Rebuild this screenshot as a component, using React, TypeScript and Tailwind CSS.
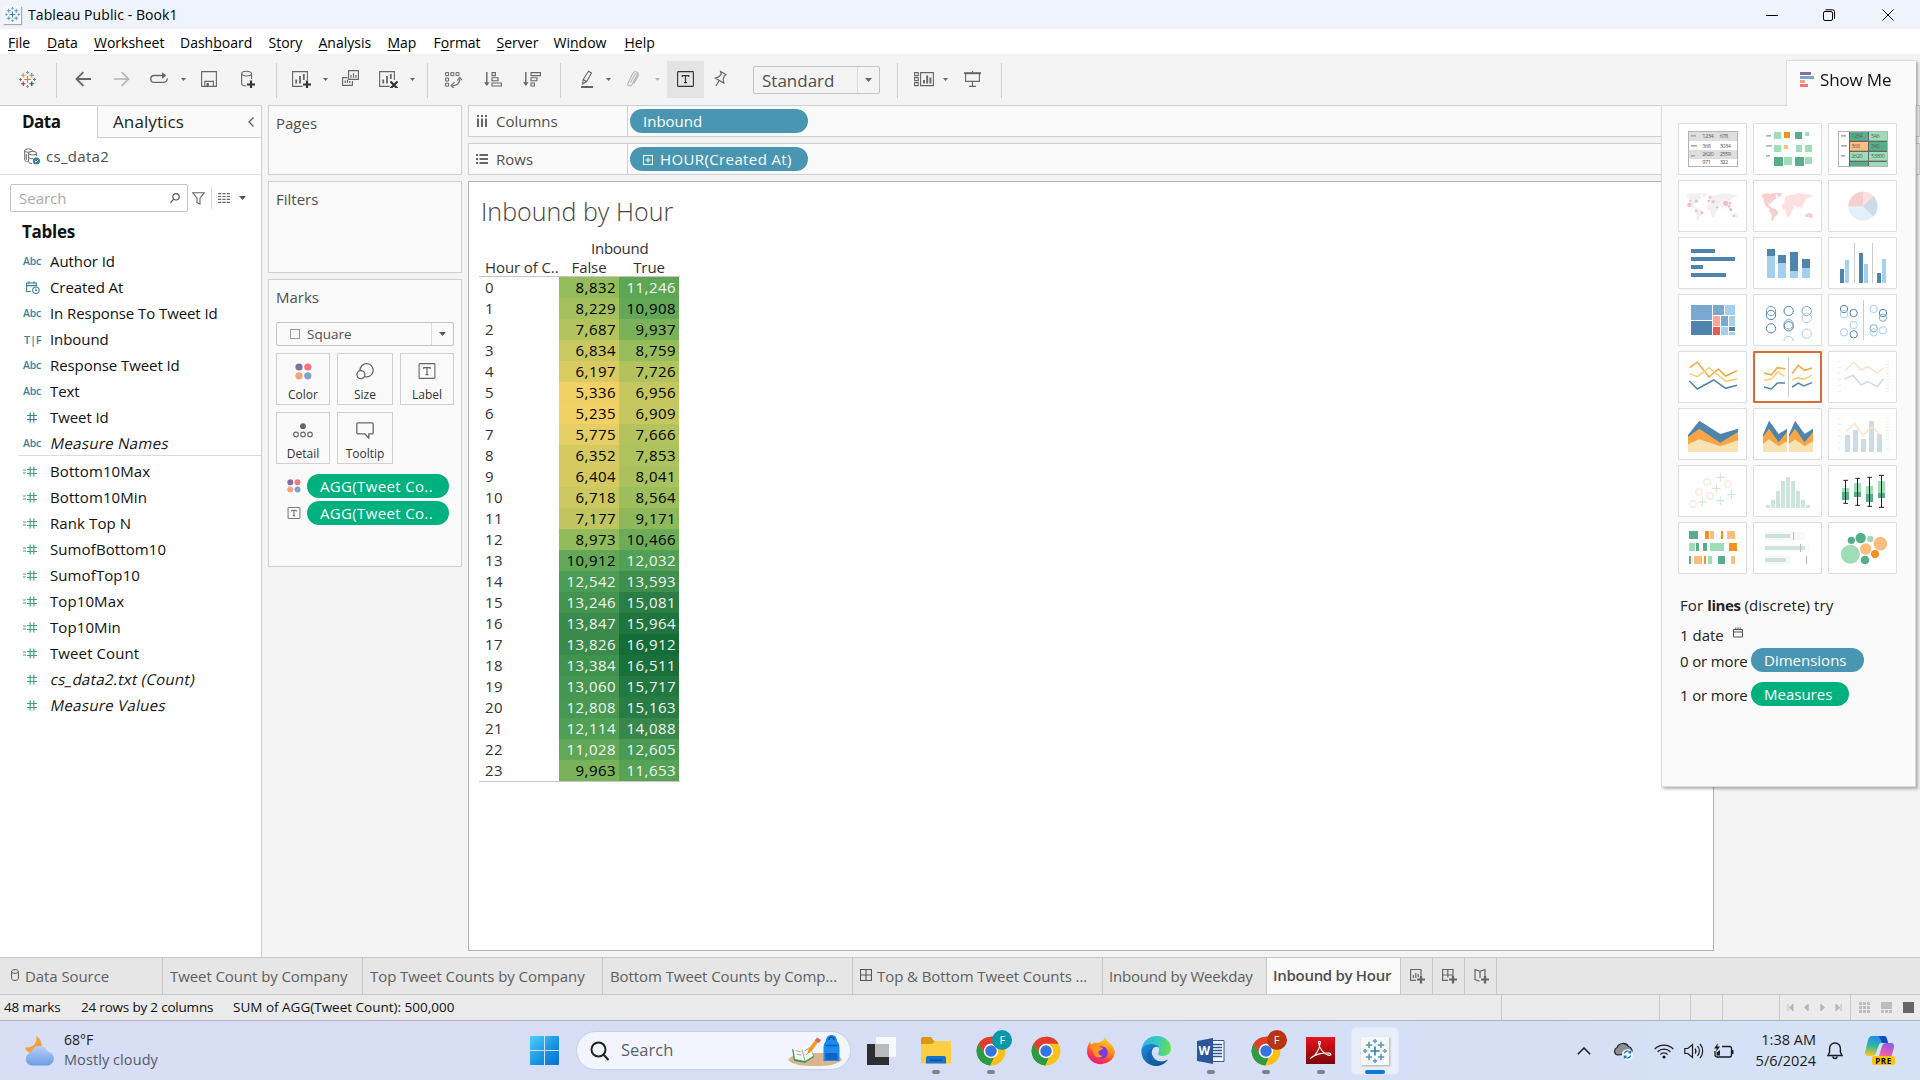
import type { ReactNode } from "react";

const BLUE = "#4f85ad";
const MID = "#7aa9cf";
const SKY = "#a5d0f0";
const GREEN = "#57ae8b";
const MINT = "#9fdcb8";
const ORANGE = "#f59024";
const PEACH = "#ffbe7f";

/* ---------- Tableau mark ---------- */
function plus(x: number, y: number, r: number) {
  return `M${x - r} ${y}H${x + r}M${x} ${y - r}V${y + r}`;
}

function TableauMark({ colors, className }: { colors: string[]; className: string }) {
  return (
    <svg viewBox="0 0 34 34" className={className} fill="none" strokeWidth="2.2">
      <path d={plus(17, 17, 6.5)} stroke={colors[0]} />
      <path d={plus(8.5, 8.5, 4.5)} stroke={colors[1]} />
      <path d={plus(25.5, 8.5, 4.5)} stroke={colors[2]} />
      <path d={plus(8.5, 25.5, 4.5)} stroke={colors[3]} />
      <path d={plus(25.5, 25.5, 4.5)} stroke={colors[4]} />
      <path d={plus(17, 3, 3)} stroke={colors[5]} />
      <path d={plus(3, 17, 3)} stroke={colors[6]} />
      <path d={plus(31, 17, 3)} stroke={colors[6]} />
      <path d={plus(17, 31, 3)} stroke={colors[5]} />
    </svg>
  );
}

const BLUES = ["#2f7fae", "#5b97b8", "#5b97b8", "#5b97b8", "#5b97b8", "#6ba3c0", "#6ba3c0"];

/* ---------- Title and menu ---------- */
function TitleBar() {
  return (
    <div className="flex h-[29px] shrink-0 items-center bg-[#eff3fb] pl-[3px]">
      <div className="flex h-[18px] w-[18px] items-center justify-center bg-[#f5f6f8] shadow-[1px_1px_1px_#aaa]">
        <TableauMark colors={BLUES} className="h-[15px] w-[15px]" />
      </div>
      <span className="ml-[7px] text-[14px] leading-none tracking-[0.08px] text-black">Tableau Public - Book1</span>
      <div className="ml-auto flex items-center gap-[46px] pr-[26px] text-black">
        <svg viewBox="0 0 12 12" className="h-3 w-3" stroke="currentColor" fill="none"><path d="M0 6.5h12" /></svg>
        <svg viewBox="0 0 12 12" className="-ml-px mr-px h-3 w-3" stroke="currentColor" fill="none">
          <rect x="0.5" y="2.5" width="9" height="9" rx="1.5" /><path d="M2.5 .8h7a2 2 0 0 1 2 2v7" />
        </svg>
        <svg viewBox="0 0 12 12" className="h-3 w-3" stroke="currentColor" fill="none"><path d="M.5.5l11 11M11.5.5l-11 11" /></svg>
      </div>
    </div>
  );
}

const MENU: [string, string, string, string][] = [
  ["", "F", "ile", "w-[39px]"], ["", "D", "ata", "w-[47px]"], ["", "W", "orksheet", "w-[86px]"],
  ["Dash", "b", "oard", "w-[88.5px]"], ["S", "t", "ory", "w-[50px]"], ["", "A", "nalysis", "w-[69px]"],
  ["", "M", "ap", "w-[46px]"], ["F", "o", "rmat", "w-[63px]"], ["", "S", "erver", "w-[57px]"],
  ["Wi", "n", "dow", "w-[71px]"], ["", "H", "elp", "w-[50px]"],
];

function MenuBar() {
  return (
    <div className="flex h-[25px] shrink-0 items-center bg-white pl-2 pt-[3px] text-[14px] leading-none text-black">
      {MENU.map(([a, b, c, w]) => (
        <span key={b + c} className={w}>
          {a}<span className="underline decoration-1 underline-offset-2">{b}</span>{c}
        </span>
      ))}
    </div>
  );
}

/* ---------- Toolbar ---------- */
function Sep({ className }: { className: string }) {
  return <div className={`mt-[3px] h-[35px] w-px shrink-0 bg-[#cfcfcf] ${className}`} />;
}

function Caret({ className }: { className: string }) {
  return (
    <svg viewBox="0 0 5 3" className={`h-[3px] w-[5px] shrink-0 ${className}`}><path d="M0 0h5L2.5 3z" fill="currentColor" /></svg>
  );
}

function Tool({ w, className, children }: { w: number; className: string; children: ReactNode }) {
  return (
    <svg viewBox={`0 0 ${w} 18`} className={`h-[18px] shrink-0 ${className}`} fill="none" stroke="currentColor" strokeWidth="1.1">
      {children}
    </svg>
  );
}

function TextBox({ className }: { className: string }) {
  return (
    <svg viewBox="0 0 17 16" className={className} fill="none" stroke="currentColor" strokeWidth="1.1">
      <rect x=".6" y=".6" width="15.8" height="14.8" rx=".6" />
      <path d="M5.3 6V4.6h6.4V6M8.5 4.6v7M7 11.7h3" strokeWidth="1.2" />
    </svg>
  );
}

function Toolbar() {
  return (
    <div className="flex h-[51px] shrink-0 items-center bg-[#f4f4f4] pb-px text-[#666]">
      <TableauMark colors={["#e8762d", "#eb912b", "#7199a6", "#c72035", "#1f457e", "#7199a6", "#5b879b"]} className="ml-[19px] h-[17px] w-[17px] shrink-0" />
      <Sep className="ml-5" />
      <Tool w={16} className="ml-[18px] w-4"><path d="M16 9H1.5M8.3 2.2L1.5 9l6.8 6.8" strokeWidth="1.9" /></Tool>
      <Tool w={16} className="ml-[23px] w-4 text-[#b3b3b3]"><path d="M0 9h14.5M7.7 2.2L14.5 9l-6.8 6.8" strokeWidth="1.7" /></Tool>
      <Tool w={18} className="ml-5 w-[18px]">
        <path d="M14 5.5H4.2a3.4 3.4 0 0 0 0 6.9h9.6a3.4 3.4 0 0 0 3.3-4" strokeWidth="1.3" />
        <path d="M12 2.2l4.3 3.3L12 8.8z" fill="currentColor" stroke="none" />
      </Tool>
      <Caret className="ml-[13px]" />
      <Tool w={16} className="ml-[15px] w-4">
        <path d="M.6 1.6h14.8v14.8H.6zM3.8 16.4v-5h8.6v5" /><path d="M5.5 13h2.4v3.4H5.5z" fill="currentColor" stroke="none" />
      </Tool>
      <Tool w={14} className="ml-6 w-[14px]">
        <ellipse cx="5.6" cy="3.6" rx="5" ry="2.4" /><path d="M.6 3.6v10c0 1.4 2 2.3 4.6 2.4M10.6 3.6V9" />
        <path d="M10 10.5v8M6 14.5h8" strokeWidth="2.2" stroke="#333" />
      </Tool>
      <Sep className="ml-[21px]" />
      <Tool w={19} className="ml-[15px] w-[19px]">
        <path d="M15.4 10V1.6H.6v14.8h10" /><path d="M4.2 9.5v4M8 6v7.5M11.8 4v6" strokeWidth="1.8" />
        <path d="M15 10.5v8M11 14.5h8" strokeWidth="2.2" stroke="#333" />
      </Tool>
      <Caret className="ml-3" />
      <Tool w={17} className="ml-[14px] w-[17px]">
        <path d="M6.6.6h9.8v8.8H6.6z" /><path d="M5.5 7.6H.6v7.8h9.8v-4.5" />
        <path d="M9 5v2.8M11.5 3.2v4.6M14 5v2.8M3.2 10.5V13M5.500 9.8V13M7.8 11v2" strokeWidth="1.2" />
      </Tool>
      <Tool w={19} className="ml-5 w-[19px]">
        <path d="M15.4 10V1.6H.6v14.8h10" /><path d="M4.2 9.5v4M8 6v7.5M11.8 4v5" strokeWidth="1.8" />
        <path d="M11.5 11.5l7 7M18.5 11.5l-7 7" strokeWidth="2.2" stroke="#333" />
      </Tool>
      <Caret className="ml-3" />
      <Sep className="ml-3" />
      <Tool w={17} className="ml-[17px] w-[17px]">
        <path d="M.6 2.6h3v3h-3zM5.8 2.6h3v3h-3zM11 2.6h3v3h-3zM.6 8h3v3h-3zM.6 13.2h3v3h-3z" strokeWidth="1" />
        <path d="M7.5 15.6c4.5 0 7.2-2.3 7.2-6.4" strokeWidth="1.3" />
        <path d="M9.5 12.2L6 15.6l3.5 3M12.2 10.5l2.6-3.2 2.6 3.2" />
      </Tool>
      <Tool w={18} className="ml-[22px] w-[18px]">
        <path d="M2.8 2v13" strokeWidth="1.4" /><path d="M0 12.3h5.6L2.8 16z" fill="currentColor" stroke="none" />
        <path d="M8 2.6h3.4v3H8zM8 7.8h6v3H8zM8 13h9.4v3H8z" />
      </Tool>
      <Tool w={18} className="ml-[21px] w-[18px]">
        <path d="M2.8 2v13" strokeWidth="1.4" /><path d="M0 12.3h5.6L2.8 16z" fill="currentColor" stroke="none" />
        <path d="M8 2.6h9.4v3H8zM8 7.8h6v3H8zM8 13h3.4v3H8z" />
      </Tool>
      <Sep className="ml-[19px]" />
      <Tool w={12} className="ml-5 w-3">
        <path d="M2.200 9.500L7.5 1.200l3 1.800L5.600 11.500 1.700 14z" /><path d="M2.200 9.500l3.400 2" /><path d="M0 17h12" strokeWidth="2" />
      </Tool>
      <Caret className="ml-[13px]" />
      <Tool w={12} className="ml-4 w-3 text-[#b3b3b3]">
        <path d="M3.5 12.5L7.8 4.6c1-1.6 2.8-.6 2 1L5 14.5c-1.800 3-5.200 1-3.800-1.800L5.8 3.5C7.6.2 12.800 2 11 6L7 13.5" />
      </Tool>
      <Caret className="ml-4 text-[#b3b3b3]" />
      <div className="ml-[7px] flex h-[37px] w-[37px] shrink-0 items-center justify-center bg-[#e4e4e4] text-[#333]">
        <TextBox className="h-4 w-[17px]" />
      </div>
      <Tool w={13} className="ml-[10px] w-[13px]">
        <path d="M6.600 1.500l5.600 3.200-1.900 1.100-1.200 3.600.7 3.700-8.600-5 3.500-1.200 2.600-2.800zM5 10.800L2 16" strokeWidth="1.2" />
      </Tool>
      <div className="ml-[26px] mt-[2px] flex h-7 w-[127px] shrink-0 items-center rounded-[2px] border border-[#c4c4c4] pl-2 text-[17px] font-normal leading-none text-[#4e4e4e]">
        <span>Standard</span>
        <span className="ml-auto flex h-full w-[22px] items-center justify-center border-l border-[#dcdcdc]">
          <svg viewBox="0 0 7 4" className="h-1 w-[7px]"><path d="M0 0h7L3.5 4z" fill="#666" /></svg>
        </span>
      </div>
      <Sep className="ml-[17px]" />
      <Tool w={20} className="ml-4 w-5">
        <path d="M.6 2.6h3.6v3H.6zM.6 7.6h3.6v3H.6zM.6 12.6h3.6v3H.6zM6.6 2.6h12.8v13H6.6z" />
        <path d="M10 10v3.6M13.2 5.5v8.1M16.4 7.5v6.1" strokeWidth="1.9" />
      </Tool>
      <Caret className="ml-[9px]" />
      <Tool w={17} className="ml-4 w-[17px]">
        <path d="M0 3.2h17" strokeWidth="2" /><path d="M1.6 4v7.4h13.8V4M8.5 1v1.5M8.5 11.4v5M5 16.4h7" />
      </Tool>
      <Sep className="ml-5" />
    </div>
  );
}

/* ---------- Data pane ---------- */
function Hash({ calc }: { calc?: boolean }) {
  return (
    <svg viewBox="0 0 14 11" className="h-[11px] w-[14px]" fill="none" stroke="currentColor" strokeWidth="1.1">
      {calc && <path d="M0 4h3M0 7h3" />}
      <path d="M4 3.5h10M4 7.5h10M7.2.5v10M10.8.5v10" strokeWidth="1.2" />
    </svg>
  );
}

function CalendarClock() {
  return (
    <svg viewBox="0 0 14 13" className="h-[13px] w-[14px]" fill="none" stroke="currentColor" strokeWidth="1.1">
      <path d="M5 10.5H.6V2h9.8v3M.6 4.6h9.8M3 .2v3M8 .2v3" /><circle cx="9.9" cy="9.2" r="3.2" /><path d="M9.8 7.4v2h1.5" />
    </svg>
  );
}

type Kind = "abc" | "date" | "tf" | "num" | "calc";
const DIMS: [Kind, string, boolean?][] = [
  ["abc", "Author Id"], ["date", "Created At"], ["abc", "In Response To Tweet Id"], ["tf", "Inbound"],
  ["abc", "Response Tweet Id"], ["abc", "Text"], ["num", "Tweet Id"], ["abc", "Measure Names", true],
];
const MEAS: [Kind, string, boolean?][] = [
  ["calc", "Bottom10Max"], ["calc", "Bottom10Min"], ["calc", "Rank Top N"], ["calc", "SumofBottom10"], ["calc", "SumofTop10"],
  ["calc", "Top10Max"], ["calc", "Top10Min"], ["calc", "Tweet Count"], ["num", "cs_data2.txt (Count)", true], ["num", "Measure Values", true],
];

function Field({ f, className }: { f: [Kind, string, boolean?]; className: string }) {
  const [kind, name, italic] = f;
  return (
    <div className="flex h-[26px] items-center">
      <span className="flex w-[50px] items-center pl-[23px]">
        {kind === "abc" && <span className="text-[10.5px] font-semibold leading-none tracking-[-0.3px]">Abc</span>}
        {kind === "tf" && <span className="ml-px text-[11px] font-semibold leading-none tracking-[-0.3px]">T|F</span>}
        {kind === "date" && <span className="ml-[3px]"><CalendarClock /></span>}
        {(kind === "num" || kind === "calc") && <Hash calc={kind === "calc"} />}
      </span>
      <span className={italic ? "ml-px inline-block -skew-x-12 text-[15px] leading-none tracking-[0.3px] text-[#111]" : `text-[15px] leading-none text-[#111] ${className}`}>{name}</span>
    </div>
  );
}

function DataPane() {
  return (
    <div className="flex w-[262px] shrink-0 flex-col border-r border-t border-[#d0d0d0] bg-white">
      <div className="flex h-8 shrink-0">
        <div className="flex w-[97px] items-center pb-px pl-[22px] text-[17px] font-bold leading-none tracking-[-0.5px] text-[#111]">Data</div>
        <div className="flex flex-1 items-center border-b border-l border-[#d0d0d0] bg-[#fafafa] pl-[15px] text-[17px] leading-none tracking-[0.1px] text-[#222]">
          Analytics
          <svg viewBox="0 0 6 10" className="ml-auto mr-[7px] h-[10px] w-[6px]" fill="none" stroke="#555" strokeWidth="1.2"><path d="M5.5.5L1 5l4.5 4.5" /></svg>
        </div>
      </div>
      <div className="flex h-[37px] shrink-0 items-center border-b border-[#e0e0e0] pl-6">
        <svg viewBox="0 0 16 17" className="h-[17px] w-4" fill="none" stroke="#666" strokeWidth="1">
          <ellipse cx="4.5" cy="2.6" rx="3.8" ry="1.7" /><path d="M.7 2.6v9c0 1 1.4 1.8 3 2M2.3 6v6" />
          <ellipse cx="8.6" cy="5.2" rx="4" ry="1.8" fill="#fff" /><path d="M4.6 5.2v8.6c0 1 1.6 1.8 3.6 1.9M12.6 5.2V8M4.6 9.6c.8.9 3 1.3 4.5 1" />
          <circle cx="12.4" cy="13" r="3.6" fill="#3b7f9e" stroke="none" /><path d="M10.8 13l1.2 1.2 2.2-2.4" stroke="#fff" />
        </svg>
        <span className="ml-[6px] text-[15px] leading-none tracking-[0.3px] text-[#4e4e4e]">cs_data2</span>
      </div>
      <div className="mt-[9px] flex h-7 shrink-0 items-center pl-[10px] text-[#666]">
        <div className="flex h-7 w-[178px] items-center rounded-[2px] border border-[#c4c4c4] pl-2 pr-[7px]">
          <span className="text-[15px] leading-none text-[#aaa]">Search</span>
          <svg viewBox="0 0 10 10" className="ml-auto h-[10px] w-[10px]" fill="none" stroke="#555" strokeWidth="1.2"><circle cx="6" cy="3.8" r="3.2" /><path d="M3.7 6.2L.4 9.6" /></svg>
        </div>
        <svg viewBox="0 0 13 13" className="ml-1 h-[13px] w-[13px]" fill="none" stroke="currentColor" strokeWidth="1.1"><path d="M.8.8h11.4L8 6.2v6L5 10.5V6.2z" /></svg>
        <div className="ml-[6px] h-[22px] w-px bg-[#d8d8d8]" />
        <svg viewBox="0 0 12 10" className="ml-[6px] h-[10px] w-3" fill="none" stroke="currentColor" strokeWidth="1.2">
          <path d="M0 .6h12M0 3.5h12M0 6.4h12M0 9.3h12" strokeDasharray="3.2 1.2" />
        </svg>
        <svg viewBox="0 0 7 4" className="ml-[9px] h-1 w-[7px]"><path d="M0 0h7L3.5 4z" fill="#555" /></svg>
      </div>
      <div className="flex h-9 shrink-0 items-center pl-[22px] pt-[2px] text-[17px] font-bold leading-none tracking-[-0.25px] text-[#111]">Tables</div>
      <div className="relative pb-[2px] text-[#3b7f9e]">
        {DIMS.map((f) => <Field key={f[1]} f={f} className="tracking-[-0.08px]" />)}
        <div className="absolute bottom-[2px] left-[18px] right-0 h-px bg-[#dcdcdc]" />
      </div>
      <div className="text-[#3fa581]">{MEAS.map((f) => <Field key={f[1]} f={f} className="tracking-[0.1px]" />)}</div>
    </div>
  );
}

/* ---------- Cards ---------- */
function Dots({ className }: { className: string }) {
  return (
    <svg viewBox="0 0 17 17" className={className}>
      <circle cx="4" cy="4" r="3.6" fill="#83709c" /><circle cx="12.8" cy="4" r="3.6" fill="#f8727f" />
      <circle cx="4" cy="12.8" r="3.6" fill="#f2a57c" /><circle cx="12.8" cy="12.8" r="3.6" fill="#7fa3cc" />
    </svg>
  );
}

function MarkButton({ label, className, children }: { label: string; className: string; children: ReactNode }) {
  return (
    <div className={`flex h-[52px] flex-col items-center border border-[#d0d0d0] bg-[#fafafa] text-[#666] ${className}`}>
      <div className="mt-[3px] flex h-7 items-center">{children}</div>
      <span className="mt-1 text-[12px] leading-none text-[#333]">{label}</span>
    </div>
  );
}

function AggPill() {
  return (
    <span className="ml-[6px] flex h-6 w-[142px] items-center rounded-full bg-[#00b180] pl-[13px] pt-px text-[15px] font-medium leading-none tracking-[0.35px] text-white">
      AGG(Tweet Co..
    </span>
  );
}

function Cards() {
  return (
    <div className="ml-[6px] flex w-[194px] shrink-0 flex-col text-[15px] leading-none text-[#4e4e4e]">
      <div className="h-[70px] border border-[#d0d0d0] bg-[#fafafa] pl-[7px] pt-[10px]">Pages</div>
      <div className="mt-[6px] h-[92px] border border-[#d0d0d0] bg-[#fafafa] pl-[7px] pt-[10px]">Filters</div>
      <div className="mt-[6px] h-[288px] border border-[#d0d0d0] bg-[#fafafa] pl-[7px] pt-[10px]">
        <div>Marks</div>
        <div className="mt-[17px] flex h-6 w-[178px] items-center rounded-[2px] border border-[#c4c4c4] bg-[#fafafa] pl-[13px]">
          <span className="h-[10px] w-[10px] border border-[#999]" />
          <span className="ml-[7px] mt-px text-[13.5px] leading-none">Square</span>
          <span className="ml-auto flex h-full w-[22px] items-center justify-center border-l border-[#dcdcdc]">
            <svg viewBox="0 0 7 4" className="h-1 w-[7px]"><path d="M0 0h7L3.5 4z" fill="#555" /></svg>
          </span>
        </div>
        <div className="mt-[7px] flex gap-[7px]">
          <MarkButton label="Color" className="w-[54px]"><Dots className="h-[17px] w-[17px]" /></MarkButton>
          <MarkButton label="Size" className="w-[56px]">
            <svg viewBox="0 0 18 18" className="h-[18px] w-[18px]" fill="none" stroke="currentColor" strokeWidth="1.3">
              <path d="M4 8.7A6.6 6.6 0 1 1 9 14.7" /><circle cx="4.9" cy="12.6" r="4" />
            </svg>
          </MarkButton>
          <MarkButton label="Label" className="w-[54px]"><TextBox className="h-4 w-[18px]" /></MarkButton>
        </div>
        <div className="mt-[7px] flex gap-[7px]">
          <MarkButton label="Detail" className="w-[54px]">
            <svg viewBox="0 0 20 15" className="mt-px h-[15px] w-5" fill="none" stroke="currentColor" strokeWidth="1.1">
              <circle cx="10" cy="3.2" r="2.9" fill="currentColor" stroke="none" />
              <circle cx="3" cy="11.4" r="2.3" /><circle cx="10" cy="11.4" r="2.3" /><circle cx="17" cy="11.4" r="2.3" />
            </svg>
          </MarkButton>
          <MarkButton label="Tooltip" className="w-[56px]">
            <svg viewBox="0 0 18 17" className="h-[17px] w-[18px]" fill="none" stroke="currentColor" strokeWidth="1.3">
              <path d="M2 .8h14a1.2 1.2 0 0 1 1.2 1.2v8.6a1.2 1.2 0 0 1-1.2 1.2h-3.2V16l-4-4.2H2A1.2 1.2 0 0 1 .8 10.6V2A1.2 1.2 0 0 1 2 .8z" />
            </svg>
          </MarkButton>
        </div>
        <div className="mt-[10px] flex flex-col gap-[3px] pl-[11px]">
          <div className="flex items-center"><Dots className="h-[14px] w-[14px]" /><AggPill /></div>
          <div className="flex items-center text-[#555]"><TextBox className="h-3 w-[14px]" /><AggPill /></div>
        </div>
      </div>
    </div>
  );
}

/* ---------- Shelves ---------- */
function Shelf({ icon, label, children }: { icon: ReactNode; label: string; children: ReactNode }) {
  return (
    <div className="flex h-8 border border-[#d0d0d0] bg-[#fafafa]">
      <div className="flex w-[159px] items-center border-r border-[#d0d0d0] pl-[7px] text-[15px] leading-none text-[#4e4e4e]">
        {icon}<span className="ml-2 mt-px">{label}</span>
      </div>
      <div className="flex items-center pl-[2px]">
        <span className="flex h-6 w-[178px] items-center rounded-full bg-[#4996b2] pl-[13px] pt-px text-[15px] font-medium leading-none text-white">{children}</span>
      </div>
    </div>
  );
}

/* ---------- Highlight table ---------- */
const ROWS: [number, number][] = [
  [8832, 11246], [8229, 10908], [7687, 9937], [6834, 8759], [6197, 7726], [5336, 6956], [5235, 6909], [5775, 7666],
  [6352, 7853], [6404, 8041], [6718, 8564], [7177, 9171], [8973, 10466], [10912, 12032], [12542, 13593], [13246, 15081],
  [13847, 15964], [13826, 16912], [13384, 16511], [13060, 15717], [12808, 15163], [12114, 14088], [11028, 12605], [9963, 11653],
];
const STOPS: [number, number, number, number][] = [
  [5235, 244, 209, 102], [6197, 217, 203, 97], [7177, 192, 198, 95], [8832, 149, 188, 91], [9937, 123, 178, 89], [10908, 98, 168, 87],
  [12032, 80, 160, 85], [13000, 69, 151, 81], [13847, 59, 139, 76], [15081, 43, 125, 70], [16912, 20, 108, 54],
];

function shade(v: number) {
  let i = 0;
  while (i < STOPS.length - 2 && v > STOPS[i + 1][0]) i++;
  const a = STOPS[i];
  const b = STOPS[i + 1];
  const t = (v - a[0]) / (b[0] - a[0]);
  return `rgb(${[1, 2, 3].map((k) => Math.round(a[k] + (b[k] - a[k]) * t)).join(",")})`;
}

function Cell({ v }: { v: number }) {
  return (
    <span
      className={`flex w-[60px] items-center justify-end pr-[3px] text-[15px] leading-none tracking-[0.45px] ${v >= 11000 ? "text-[#f4f4f4]" : "text-black"}`}
      style={{ backgroundColor: shade(v) }}
    >
      {v.toLocaleString("en-US")}
    </span>
  );
}

function Sheet() {
  return (
    <div className="mt-[6px] h-[770px] w-[1246px] border border-[#b3b3b3] bg-white pl-[10px]">
      <h1 className="flex h-[57px] items-center pl-[2px] pt-px text-[25px] font-light leading-none tracking-[0.05px] text-[#444]">Inbound by Hour</h1>
      <div className="w-[201px] text-[15px] leading-none text-[#333]">
        <div className="flex h-[18px] items-center pl-[112px] font-medium tracking-[-0.25px]">Inbound</div>
        <div className="flex h-5 items-center border-b border-[#c8c8c8] pt-px font-medium tracking-[-0.1px]">
          <span className="w-20 whitespace-nowrap pl-[6px]">Hour of C..</span>
          <span className="w-[60px] text-center">False</span>
          <span className="w-[60px] text-center">True</span>
        </div>
        {ROWS.map(([f, t], i) => (
          <div key={i} className="flex h-[21px]">
            <span className="flex w-20 items-center pl-[6px] tracking-[0.4px]">{i}</span>
            <Cell v={f} />
            <Cell v={t} />
          </div>
        ))}
        <div className="h-px bg-[#c8c8c8]" />
      </div>
    </div>
  );
}

/* ---------- Show Me ---------- */
type R = [number, number, number, number, string];
const Rects = ({ r }: { r: R[] }) => <>{r.map(([x, y, w, h, f], i) => <rect key={i} x={x} y={y} width={w} height={h} fill={f} />)}</>;
type C = [number, number, number, string];
const Rings = ({ c }: { c: C[] }) => <g fill="none" strokeWidth="3">{c.map(([x, y, r, s], i) => <circle key={i} cx={x} cy={y} r={r} stroke={s} />)}</g>;
type P = [string, string];
const Lines = ({ l }: { l: P[] }) => <g fill="none" strokeWidth="4.5">{l.map(([p, s], i) => <polyline key={i} points={p} stroke={s} />)}</g>;
const Areas = ({ l }: { l: P[] }) => <>{l.map(([p, s], i) => <polygon key={i} points={p} fill={s} />)}</>;
type T = [number, number, string];
const Nums = ({ t }: { t: T[] }) => (
  <g fontSize="17" fill="#5c5c5c" letterSpacing="-1.6">{t.map(([x, y, s]) => <text key={s} x={x} y={y}>{s}</text>)}</g>
);

function World({ a, b }: { a: string; b: string }) {
  return (
    <g>
      <path fill={a} d="M26 44l12-4 16 2 6-3 10 2-2 8 4 5-9 5-6 8-5 4-4-2-2 6 5 4 6 5 10 3 9 8-3 9-8 6-4 9-2 5-4-4 1-16-7-10 1-8-8-4-6-8-4-10 2-8-6-2zM66 40l22-2-2 6-9 8-4-7zM156 104l12-6 10 4 2 8-6 5-8-5-8 2z" />
      <path fill={b} d="M94 62l2-10 12-7 18-2 10-4 18 3 24 2-2 5-8 4-4 3-4-2-2 8-6 8-2 8-5 4 2 8-5-6-5-6-4 9-5-10-8-3 4 8-6 6 2-4-8-10-12-4-6 2zM88 72l10-4 14 2 8 12 3 3-7 7-2 8-6 12-6 0-3-12-2-9-8-3-3-8z" />
    </g>
  );
}

const TICKS = "M30 31h9M30 49h9M30 67h9M30 85h9M30 103h9M30 121h9M174 31h9M174 40h9M174 49h9M174 58h9M174 67h9M174 76h9M174 85h9M174 94h9M174 103h9M174 112h9M174 121h9";

const THUMBS: ReactNode[] = [
  <>
    <Rects r={[[30, 24, 150, 108, "#b3b3b3"], [33, 27, 144, 27, "#dedede"], [33, 54, 144, 27, "#fff"], [33, 81, 144, 27, "#dedede"], [33, 108, 144, 21, "#fff"], [39, 36, 15, 5, "#aaa"], [39, 66, 18, 5, "#aaa"], [39, 96, 12, 5, "#aaa"]]} />
    <Nums t={[[73, 46, "1234"], [125, 46, "678"], [73, 74, "368"], [125, 74, "3034"], [73, 100, "2620"], [125, 100, "2559"], [73, 124, "971"], [125, 124, "322"]]} />
  </>,
  <Rects r={[[39, 36, 15, 5, "#b3b3b3"], [39, 66, 18, 5, "#b3b3b3"], [39, 96, 12, 5, "#b3b3b3"], [63, 27, 21, 21, MINT], [93, 27, 18, 18, ORANGE], [126, 27, 21, 21, GREEN], [156, 27, 12, 12, MINT], [63, 66, 21, 21, MINT], [93, 66, 12, 12, PEACH], [129, 66, 18, 21, MINT], [156, 66, 21, 21, MINT], [63, 102, 27, 27, GREEN], [93, 102, 24, 24, MINT], [126, 102, 27, 27, GREEN], [156, 102, 21, 21, MINT]]} />,
  <>
    <Rects r={[[30, 24, 150, 108, "#b3b3b3"], [33, 27, 30, 102, "#fff"], [63, 27, 114, 102, "#666"], [66, 27, 54, 26, GREEN], [123, 27, 54, 26, MINT], [66, 57, 54, 26, PEACH], [123, 57, 54, 26, GREEN], [66, 87, 54, 26, MINT], [123, 87, 54, 26, MINT], [66, 117, 54, 12, GREEN], [123, 117, 54, 12, MINT], [39, 36, 15, 5, "#aaa"], [39, 66, 18, 5, "#aaa"], [39, 96, 12, 5, "#aaa"]]} />
    <Nums t={[[70, 46, "1234"], [129, 46, "546"], [70, 76, "368"], [129, 76, "340"], [70, 106, "2620"], [129, 106, "53890"]]} />
  </>,
  <>
    <World a="#f1f1f1" b="#f1f1f1" />
    <g fill="#f2c0c4">
      <circle cx="34" cy="75" r="6.5" /><circle cx="37" cy="63" r="3.5" /><circle cx="55" cy="64" r="4.5" /><circle cx="96" cy="52" r="4.5" /><circle cx="92" cy="63" r="4" /><circle cx="105" cy="65" r="5" /><circle cx="143" cy="70" r="8" /><circle cx="156" cy="70" r="4" /><circle cx="153" cy="79" r="4" /><circle cx="117" cy="82" r="3.5" /><circle cx="158" cy="89" r="5" /><circle cx="55" cy="93" r="4" /><circle cx="72" cy="98" r="4.5" /><circle cx="168" cy="108" r="3.5" />
    </g>
  </>,
  <World a="#f7cfcf" b="#ffe0e0" />,
  <>
    <circle cx="105" cy="79" r="43.5" fill="#e3f0fa" />
    <path d="M105 79V35.5A43.5 43.5 0 0 0 61.5 79z" fill="#f7cfcf" />
    <path d="M105 79V35.5A43.5 43.5 0 0 1 135.8 48.2z" fill="#ffe0e0" />
    <path d="M105 79L135.8 48.2A43.5 43.5 0 0 1 135.8 109.8z" fill="#cddbe8" />
  </>,
  <Rects r={[[39, 36, 72, 12, BLUE], [39, 60, 132, 12, BLUE], [39, 84, 36, 12, BLUE], [39, 108, 105, 12, BLUE]]} />,
  <Rects r={[[42, 36, 24, 21, BLUE], [42, 57, 24, 66, SKY], [75, 54, 24, 24, BLUE], [75, 78, 24, 45, SKY], [111, 45, 24, 57, BLUE], [111, 102, 24, 21, SKY], [147, 66, 24, 27, BLUE], [147, 93, 24, 30, SKY]]} />,
  <Rects r={[[36, 96, 12, 42, BLUE], [51, 69, 12, 69, SKY], [78, 18, 3, 120, "#ccc"], [93, 48, 12, 90, BLUE], [108, 81, 12, 57, SKY], [132, 18, 3, 120, "#ccc"], [147, 108, 12, 30, BLUE], [162, 66, 12, 72, SKY]]} />,
  <Rects r={[[39, 33, 63, 45, MID], [39, 81, 63, 42, BLUE], [105, 33, 33, 30, MID], [141, 33, 30, 30, SKY], [105, 66, 21, 30, "#ffa59d"], [129, 66, 21, 30, MID], [153, 66, 18, 30, SKY], [105, 99, 21, 24, "#e15e56"], [129, 99, 21, 24, SKY], [153, 99, 18, 12, BLUE], [153, 114, 18, 9, SKY]]} />,
  <>
    <Rings c={[[54, 51, 14, MID], [54, 63, 14, BLUE], [54, 103, 14, BLUE], [107, 51, 14, BLUE], [107, 91, 14, MID], [107, 97, 14, BLUE], [161, 51, 14, MID], [161, 72, 14, SKY], [161, 119, 14, SKY]]} />
    <path d="M93 141a14 14 0 0 1 28 0" fill="none" stroke={SKY} strokeWidth="3" />
  </>,
  <>
    <Rings c={[[48, 45, 11, BLUE], [48, 60, 11, SKY], [77, 57, 11, BLUE], [77, 93, 11, SKY], [48, 115, 11, SKY], [77, 121, 11, BLUE], [137, 45, 11, SKY], [165, 57, 11, BLUE], [165, 71, 11, MID], [137, 103, 11, MID], [137, 115, 11, SKY], [165, 109, 11, SKY]]} />
    <Rects r={[[105, 18, 3, 120, "#ccc"]]} />
  </>,
  <Lines l={[["36,50 58,33 93,78 121,54 143,75 177,59", "#f9a546"], ["34,68 58,77 93,50 143,91 177,84", "#f6cf72"], ["34,90 58,114 107,87 143,112 177,103", BLUE]]} />,
  <>
    <Lines l={[["33,66 55,72 73,50 96,53", "#f9a546"], ["33,88 55,84 75,62 94,76", "#f6cf72"], ["33,108 55,114 73,96 96,96", BLUE], ["117,68 136,43 155,58 177,51", "#f9a546"], ["117,87 136,80 152,85 177,73", "#f6cf72"], ["117,108 136,96 152,105 177,95", BLUE]]} />
    <Rects r={[[105, 18, 3, 120, "#ccc"]]} />
  </>,
  <>
    <path d={TICKS} stroke="#ededed" strokeWidth="3" />
    <Lines l={[["50,60 77,34 100,57 119,47 147,66 166,51", "#fde3c8"], ["50,84 75,73 100,102 119,92 148,107 166,84", "#cddbe8"]]} />
  </>,
  <Areas l={[["30,81 64,38 127,78 180,62 180,132 30,132", BLUE], ["30,87 64,62 127,104 180,72 180,132 30,132", "#f9a546"], ["30,109 64,94 127,115 180,97 180,132 30,132", "#f9e2b4"]]} />,
  <Areas l={[["30,80 48,38 77,78 102,62 102,132 30,132", BLUE], ["30,86 48,62 77,103 102,72 102,132 30,132", "#f9a546"], ["30,108 48,94 77,115 102,100 102,132 30,132", "#f9e2b4"], ["108,80 126,38 155,78 180,62 180,132 108,132", BLUE], ["108,86 126,62 155,103 180,72 180,132 108,132", "#f9a546"], ["108,108 126,94 155,115 180,100 180,132 108,132", "#f9e2b4"]]} />,
  <>
    <path d={TICKS} stroke="#ededed" strokeWidth="3" />
    <Rects r={[[51, 81, 15, 51, "#cddbe8"], [75, 66, 15, 66, "#cddbe8"], [99, 93, 15, 39, "#cddbe8"], [123, 39, 15, 93, "#cddbe8"], [147, 78, 15, 54, "#cddbe8"]]} />
    <Lines l={[["54,70 80,46 105,82 132,56 159,82", "#fde3c8"]]} />
  </>,
  <>
    <Rings c={[[87, 51, 10, "#fde0c2"], [150, 57, 10, "#fde0c2"], [63, 81, 10, "#fde0c2"], [96, 93, 10, "#fde0c2"], [45, 117, 10, "#fde0c2"]]} />
    <path d={plus(127, 37, 13) + plus(115, 70, 13) + plus(160, 89, 13) + plus(73, 111, 13) + plus(127, 107, 13)} stroke="#c9e6d9" strokeWidth="3" />
  </>,
  <Rects r={[120, 105, 78, 48, 36, 48, 78, 105, 120].map((y, i): R => [39 + i * 15, y, 12, 129 - y, "#cde6dc"])} />,
  <>
    <Rects r={[[42, 69, 21, 12, MINT], [42, 81, 21, 24, GREEN], [78, 54, 21, 27, MINT], [78, 81, 21, 15, GREEN], [114, 63, 21, 24, MINT], [114, 87, 21, 24, GREEN], [150, 48, 21, 36, MINT], [150, 84, 21, 15, GREEN]]} />
    <path d="M46 46h14M46 115h14M52.5 46v69M82 40h14M82 121h14M88.5 40v81M118 37h14M118 124h14M124.5 37v87M153 31h15M153 127h15M160.5 31v96" stroke="#222" strokeWidth="3" />
  </>,
  <Rects r={[[33, 27, 27, 24, GREEN], [81, 27, 12, 24, ORANGE], [96, 27, 12, 24, PEACH], [129, 27, 6, 24, ORANGE], [147, 27, 24, 24, PEACH], [33, 63, 18, 24, MINT], [54, 63, 9, 24, GREEN], [75, 63, 12, 24, GREEN], [96, 63, 42, 24, MINT], [153, 63, 24, 24, ORANGE], [33, 102, 6, 24, GREEN], [48, 102, 24, 24, PEACH], [78, 102, 6, 24, ORANGE], [90, 102, 12, 24, MINT], [120, 102, 21, 24, GREEN], [159, 102, 12, 24, PEACH]]} />,
  <Rects r={[[36, 30, 120, 24, "#f8f8f8"], [36, 66, 135, 24, "#fbfbfb"], [36, 102, 75, 24, "#f8f8f8"], [36, 36, 75, 12, "#cde6dc"], [36, 72, 120, 12, "#cde6dc"], [36, 108, 63, 12, "#cde6dc"], [120, 30, 3, 24, "#bbb"], [141, 66, 3, 24, "#bbb"], [159, 102, 3, 24, "#bbb"]]} />,
  <g>
    <circle cx="67" cy="97" r="28.5" fill={MINT} /><circle cx="70" cy="55" r="11" fill={GREEN} /><circle cx="98" cy="48" r="15.5" fill={GREEN} /><circle cx="127" cy="51" r="9.5" fill={MINT} />
    <circle cx="157" cy="65" r="20.5" fill={PEACH} /><circle cx="113" cy="81" r="17" fill={PEACH} /><circle cx="141" cy="96" r="12" fill={ORANGE} /><circle cx="111" cy="114" r="13" fill={GREEN} />
  </g>,
];

function ShowMe() {
  return (
    <div className="absolute right-[4px] top-[60px] flex w-[255px] flex-col items-end text-[15px] leading-none text-[#222] drop-shadow-[2px_2px_1.5px_rgba(0,0,0,0.3)]">
      <div className="relative z-10 -mb-px flex h-[46px] w-[130px] items-center border-l border-t border-[#dcdcdc] bg-[#fafafa] pb-2 pl-[13px]">
        <svg viewBox="0 0 14 15" className="h-[15px] w-[14px] shrink-0">
          <path d="M0 0h11v3H0z" fill="#83709c" /><path d="M0 4h14v3H0z" fill="#7fa3cc" /><path d="M0 8h5v3H0z" fill="#f2a57c" /><path d="M0 12h8v3H0z" fill="#f8727f" />
        </svg>
        <span className="ml-[6px] whitespace-nowrap text-[17px] tracking-[-0.15px] text-[#111]">Show Me</span>
      </div>
      <div className="h-[682px] w-full border border-[#dcdcdc] bg-[#fafafa] pl-4 pt-[17px]">
        <div className="grid w-[219px] grid-cols-3 gap-x-[6px] gap-y-[5px]">
          {THUMBS.map((t, i) => (
            <div key={i} className={`relative h-[52px] rounded-[1px] bg-white ${i === 13 ? "border-2 border-[#d96b35]" : "border border-[#dedede]"}`}>
              <svg viewBox="0 0 207 156" className={i === 13 ? "absolute -left-[2px] -top-[2px] h-[52px] w-[69px]" : "absolute -left-px -top-px h-[52px] w-[69px]"}>{t}</svg>
            </div>
          ))}
        </div>
        <div className="mt-[22px] pl-[2px]">
          <div className="flex h-[18px] items-center whitespace-pre tracking-[0.1px]">For <b className="font-bold tracking-[-0.4px]">lines</b> (discrete) try</div>
          <div className="mt-[12px] flex h-[18px] items-center">
            1 date
            <svg viewBox="0 0 10 11" className="-mt-[5px] ml-[9px] h-[11px] w-[10px]" fill="none" stroke="#555"><path d="M.5 2.5h9v7.5h-9zM.5 5h9M2.8.5v2M5 .5v2M7.2.5v2" /></svg>
          </div>
          <div className="mt-1 flex h-6 items-center">
            <span className="w-[71px] whitespace-nowrap pt-[2px] tracking-[-0.15px]">0 or more</span>
            <span className="flex h-6 w-[113px] items-center rounded-full bg-[#4996b2] pl-[13px] pt-px font-medium text-white">Dimensions</span>
          </div>
          <div className="mt-[10px] flex h-6 items-center">
            <span className="w-[71px] whitespace-nowrap pt-[2px] tracking-[-0.15px]">1 or more</span>
            <span className="flex h-6 w-[98px] items-center rounded-full bg-[#00b180] pl-[13px] pt-px font-medium text-white">Measures</span>
          </div>
        </div>
      </div>
    </div>
  );
}

/* ---------- Sheet tabs and status ---------- */
function GridIcon({ className }: { className: string }) {
  return <svg viewBox="0 0 12 12" className={className} fill="none" stroke="#555"><path d="M.5.5h11v11H.5zM6 .5v11M.5 6h11" strokeWidth="1.1" /></svg>;
}

function SheetTabs() {
  const tab = "flex items-center border-r border-[#c6c6c6] whitespace-nowrap";
  return (
    <div className="flex h-[38px] shrink-0 border-b border-t border-[#c6c6c6] bg-[#e6e6e6] text-[15px] leading-none tracking-[-0.08px] text-[#5f5f5f]">
      <div className={`${tab} w-[163px] pl-[11px]`}>
        <svg viewBox="0 0 8 12" className="mb-[2px] mr-[6px] h-[12px] w-2" fill="none" stroke="#555"><path d="M.6 2.5C.6 1.4 2 .6 4 .6s3.4.8 3.4 1.9v7c0 1.1-1.4 1.9-3.4 1.9S.6 10.6.6 9.5zM.6 2.5C.6 3.5 2 4.3 4 4.3s3.4-.8 3.4-1.8" /></svg>
        Data Source
      </div>
      <div className={`${tab} w-[200px] pl-[7px]`}>Tweet Count by Company</div>
      <div className={`${tab} w-[240px] pl-[7px]`}>Top Tweet Counts by Company</div>
      <div className={`${tab} w-[250px] pl-[7px]`}>Bottom Tweet Counts by Comp...</div>
      <div className={`${tab} w-[250px] pl-[7px]`}><GridIcon className="mb-[2px] mr-[5px] h-3 w-3" />Top &amp; Bottom Tweet Counts ...</div>
      <div className={`${tab} w-[164px] pl-[6px] tracking-[-0.2px]`}>Inbound by Weekday</div>
      <div className={`${tab} w-[134px] bg-[#fafafa] pb-[2px] pl-[6px] font-semibold tracking-[-0.3px] text-[#4e4e4e]`}>Inbound by Hour</div>
      {[0, 1, 2].map((k) => (
        <div key={k} className={`${tab} w-8 justify-center pl-[2px]`}>
          <svg viewBox="0 0 15 16" className="h-4 w-[15px]" fill="none" stroke="#666" strokeWidth="1.2">
            {k === 0 && <path d="M11 7V1.5H.6v10.9H6M3.4 7v3M5.8 5v5M8.2 6v3" />}
            {k === 1 && <path d="M11 7V1.5H.6v10.9H6M5.8 1.5v8M.6 7H11" />}
            {k === 2 && <path d="M11 7V1.5L6 3.3 1 1.5v10l4.5 1.8M6 3.3V10" />}
            <path d="M11 7.5v8M7 11.5h8" strokeWidth="2.2" />
          </svg>
        </div>
      ))}
    </div>
  );
}

function StatusBar() {
  const cell = "h-full border-r border-[#c9c9c9]";
  return (
    <div className="flex h-[26px] shrink-0 items-center border-b border-[#b3b3bd] bg-[#ebebeb] text-[13.5px] leading-none text-[#111]">
      <span className="ml-1 w-[77px] whitespace-nowrap tracking-[-0.2px]">48 marks</span>
      <span className="w-[152px] whitespace-nowrap tracking-[-0.2px]">24 rows by 2 columns</span>
      <span className="whitespace-nowrap">SUM of AGG(Tweet Count): 500,000</span>
      <div className="ml-auto flex h-full items-center">
        <div className={cell} />
        <div className={`${cell} w-[158px]`} />
        <div className={`${cell} w-[31px]`} />
        <div className={`${cell} w-8`} />
        <div className={`${cell} w-[57px]`} />
        <div className={`${cell} flex w-[71px] items-center justify-center gap-[9px] pb-px pr-px text-[#b8b8b8]`}>
          {["M1 0v8M7 0v8L2.5 4z", "M6 0v8L1.5 4z", "M2 0v8L6.5 4z", "M7 0v8M1 0v8L5.5 4z"].map((d) => (
            <svg key={d} viewBox="0 0 8 8" className="h-[7px] w-[7px]" fill="currentColor" stroke="currentColor" strokeWidth="1"><path d={d} /></svg>
          ))}
        </div>
        <div className="flex w-[69px] items-center gap-[11px] pb-px pl-2">
          <svg viewBox="0 0 11 11" className="h-[11px] w-[11px]" fill="#bdbdbd"><path d="M0 0h3v3H0zM4 0h3v3H4zM8 0h3v3H8zM0 4h3v3H0zM4 4h3v3H4zM8 4h3v3H8zM0 8h3v3H0zM4 8h3v3H4zM8 8h3v3H8z" /></svg>
          <svg viewBox="0 0 11 11" className="h-[11px] w-[11px]" fill="#bdbdbd"><path d="M0 0h11v7H0zM0 8h3v3H0zM4 8h3v3H4zM8 8h3v3H8z" /></svg>
          <span className="h-[11px] w-[11px] bg-[#666]" />
        </div>
      </div>
    </div>
  );
}

/* ---------- Taskbar ---------- */
function Chrome() {
  return (
    <svg viewBox="0 0 48 48" className="h-[30px] w-[30px]">
      <circle cx="24" cy="24" r="23" fill="#fbc116" />
      <path d="M4.1 12.5L14 29.8a11.5 11.5 0 0 0 14 5L22.500 47A23 23 0 0 1 4.1 12.5z" fill="#2c9b47" />
      <path d="M24 1a23 23 0 0 1 20 11.5H24A11.5 11.5 0 0 0 14 29.800L4.1 12.5A23 23 0 0 1 24 1z" fill="#e33b2e" />
      <path d="M4.1 12.5L14 29.8a11.5 11.5 0 0 0 14 5L22.500 47A23 23 0 0 1 4.1 12.5z" fill="#2c9b47" />
      <circle cx="24" cy="24" r="11.5" fill="#fff" /><circle cx="24" cy="24" r="9.2" fill="#3474e0" />
    </svg>
  );
}

function ChromeBadge({ className }: { className: string }) {
  return (
    <span className="relative">
      <Chrome />
      <span className={`absolute -right-[6px] -top-[6px] flex h-5 w-5 items-center justify-center rounded-full text-[11px] leading-none text-white ${className}`}>F</span>
    </span>
  );
}

function Firefox() {
  return (
    <svg viewBox="0 0 30 30" className="h-[30px] w-[30px]">
      <defs><linearGradient id="ff" x1=".8" y1="0" x2=".3" y2="1"><stop offset="0" stopColor="#ffe226" /><stop offset=".45" stopColor="#ff8a1c" /><stop offset=".75" stopColor="#ff3a48" /><stop offset="1" stopColor="#e31587" /></linearGradient></defs>
      <path d="M19 1c.5 3 4 4.500 6.500 8C28 12 29 14 28.800 17A14 13 0 0 1 1 16.500C.8 12 2 8.500 4 5.500c.2 1.500.6 2.300 1.400 3C7 7 9 6.500 11 7c1.500-.2 3-1 4-1.500C16.500 4.500 18.500 3 19 1z" fill="url(#ff)" />
      <circle cx="15.5" cy="16.5" r="6.3" fill="#7a3be0" />
      <path d="M4 11c3-2.500 7-1.800 9.500 0 2 .3 3.500.5 3.500 1.200-.5 1.500-3 1.500-4.500 3.500-.5 2.500 2 4.300 4.500 4-3 3.500-9 1.500-9.500-3C7 14.500 5.500 12.500 4 11z" fill="#ff9420" />
    </svg>
  );
}

function Edge() {
  return (
    <svg viewBox="0 0 30 30" className="h-[30px] w-[30px]">
      <defs>
        <linearGradient id="e1" x1="0" y1=".3" x2="1" y2=".4"><stop offset="0" stopColor="#2fb4ee" /><stop offset=".55" stopColor="#36c9c0" /><stop offset="1" stopColor="#6be04c" /></linearGradient>
        <linearGradient id="e2" x1="0" y1="0" x2="1" y2="1"><stop offset="0" stopColor="#1b8fdd" /><stop offset="1" stopColor="#114a8b" /></linearGradient>
      </defs>
      <path d="M.5 13.500C2 5 8 0 15.500 0 24 0 30 6 30 12c0 5-3.500 8-8 8-4 0-5-1.500-5-2.500 0-.8 1.200-1.500 1.200-4 0-3-3.200-5.500-7.200-5.500C5.500 8 2.500 10.500.5 13.500z" fill="url(#e1)" />
      <path d="M.5 13.500C2.500 9.500 6.500 8 11 8c3.500 0 6 1.500 7 3.500-2-1.300-4.500-.8-6 1-2 2.500-1.500 8 2.500 11 3.500 2.500 8.500 2.500 12.500 0-2.500 4-7 6.500-12 6.500C6.500 30-.5 23 .5 13.500z" fill="url(#e2)" />
      <path d="M12 12.500c-4 4.500-2.500 12 3.500 17.500C9.500 29 5.800 24.500 6 19.500c.1-3.500 2.500-6.500 6-7z" fill="#0f5ea8" opacity=".6" />
    </svg>
  );
}

function Slot({ dot, children }: { dot?: boolean; children: ReactNode }) {
  return (
    <div className="relative flex h-full w-[54.9px] shrink-0 items-center justify-center">
      {children}
      {dot && <span className="absolute bottom-[6px] h-1 w-2 rounded-full bg-[#7d828f]" />}
    </div>
  );
}

function Taskbar() {
  return (
    <div className="flex h-[59px] shrink-0 items-center bg-gradient-to-r from-[#d7def6] via-[#d6def5] to-[#d5e2f8] pl-[25px] text-[14px] leading-none text-[#1b1b1b]">
      <svg viewBox="0 0 30 30" className="h-[30px] w-[30px] shrink-0">
        <defs><linearGradient id="cl" x1="0" y1="0" x2="0" y2="1"><stop offset="0" stopColor="#b8d0f6" /><stop offset="1" stopColor="#6e9ce6" /></linearGradient></defs>
        <path d="M11 0c1.500 5-1 12-11 11.500C1 15 4 17.500 8 17.500c5.500 0 9-4.500 8.500-9.500C16 4 14 1.500 11 0z" fill="#f2a43c" />
        <path d="M7 29.500a6.500 6.500 0 0 1-.8-12.900 8.500 8.500 0 0 1 16.300-1A7 7 0 0 1 23 29.500z" fill="url(#cl)" />
      </svg>
      <div className="ml-[9px] flex w-[466px] shrink-0 flex-col gap-[6px]">
        <span>68°F</span><span className="text-[14.5px] tracking-[0.08px] text-[#555a66]">Mostly cloudy</span>
      </div>
      <svg viewBox="0 0 29 29" className="h-[29px] w-[29px] shrink-0">
        <defs><linearGradient id="win" x1="0" y1="0" x2="1" y2="1"><stop offset="0" stopColor="#4fd0fb" /><stop offset=".6" stopColor="#1590e0" /><stop offset="1" stopColor="#0572cf" /></linearGradient></defs>
        <path d="M1 0h13v14H0V1a1 1 0 0 1 1-1zM15 0h13a1 1 0 0 1 1 1v13H15zM0 15h14v14H1a1 1 0 0 1-1-1zM15 15h14v13a1 1 0 0 1-1 1H15z" fill="url(#win)" />
      </svg>
      <div className="ml-[17px] flex h-[39px] w-[275px] shrink-0 items-center rounded-full border border-[#c9d0e4] bg-[#f2f5fd] pl-[13px]">
        <svg viewBox="0 0 20 20" className="h-5 w-5" fill="none" stroke="#222" strokeWidth="2"><circle cx="8.5" cy="8.5" r="7" /><path d="M13.5 13.5l5 5.5" /></svg>
        <span className="ml-[11px] text-[16.5px] text-[#5b5f69]">Search</span>
        <svg viewBox="0 0 57 36" className="ml-auto mr-[7px] h-9 w-[57px]">
          <path d="M2 27c4-5 10-7 18-7h24c6 0 9 2 12 7-6 5-14 6-27 6S7 32 2 27z" fill="#dcb48d" />
          <path d="M6 16l10 2 8-6 4 12-9 6-11-2z" fill="#3f9e58" />
          <path d="M7 14l9 2.500 8-5.500 3 12-8 5-10-2z" fill="#fbfbf6" /><path d="M16 16.500l3 11.500M9.500 17.500l5 1.200M10.500 21l5 1.200M18.500 18l5-3.500M19.500 22l5-3.500" stroke="#9aa3a0" fill="none" />
          <path d="M30 6l3 2-8 11-3.500 1.500.8-4z" fill="#f59a28" /><path d="M29 7.500L31 4.500l4 2.500-2 3z" fill="#e2605f" />
          <path d="M40 8c0-8 11-8 11 0 2 2 2.500 4 2.500 8v12H37.500V16c0-4 .5-6 2.500-8z" fill="#1a8cf0" />
          <path d="M43 7c0-4 5-4 5 0" fill="none" stroke="#0b4fa3" strokeWidth="1.5" /><path d="M39.500 20h12v7h-12z" fill="#1263c4" /><path d="M39.500 12.500h12" stroke="#0b5bb8" strokeWidth="1.5" />
        </svg>
      </div>
      <div className="ml-[3px] flex h-full shrink-0">
        <Slot>
          <svg viewBox="0 0 31 30" className="h-[30px] w-[31px]">
            <path d="M10 1h20v20H10z" fill="#f8f9fb" /><path d="M1 8h22v21H1z" fill="#2e2e2e" /><path d="M9 8h14v13H9z" fill="#b9bbbd" />
          </svg>
        </Slot>
        <Slot dot>
          <svg viewBox="0 0 30 28" className="mt-px h-7 w-[30px]">
            <path d="M0 2.500C0 1 .8 0 2 0h8l3 4h16v8H0z" fill="#d99a0f" />
            <path d="M0 7h11l3-3h15a1 1 0 0 1 1 1v20.500a1 1 0 0 1-1 1H1a1 1 0 0 1-1-1z" fill="#fdcf45" />
            <path d="M5 26.500V21a2 2 0 0 1 2-2h16a2 2 0 0 1 2 2v5.500z" fill="#1373cf" /><path d="M9 22.500h12v1.500H9z" fill="#0a4f9c" />
          </svg>
        </Slot>
        <Slot dot><ChromeBadge className="bg-[#0a97a7]" /></Slot>
        <Slot><Chrome /></Slot>
        <Slot><Firefox /></Slot>
        <Slot><Edge /></Slot>
        <Slot dot>
          <span className="relative flex h-[26px] w-[28px] items-center">
            <svg viewBox="0 0 28 26" className="absolute inset-0 h-[26px] w-7">
              <path d="M14 2.500h13v21H14z" fill="#fff" stroke="#2b579a" /><path d="M16 6.500h9M16 9.500h9M16 12.500h9M16 15.500h9M16 18.500h9" stroke="#2b579a" strokeWidth="1.3" />
              <path d="M0 3l16-3v26L0 23z" fill="#2b579a" />
            </svg>
            <span className="relative w-[15px] text-center text-[12px] font-bold leading-none text-white">W</span>
          </span>
        </Slot>
        <Slot dot><ChromeBadge className="bg-[#b8350f]" /></Slot>
        <Slot dot>
          <svg viewBox="0 0 29 27" className="h-[27px] w-[29px]">
            <defs><linearGradient id="ac" x1="0" y1="0" x2="0" y2="1"><stop offset="0" stopColor="#e8131b" /><stop offset="1" stopColor="#7a0608" /></linearGradient></defs>
            <path d="M0 0h29v27H0z" fill="url(#ac)" />
            <path d="M5 21c4-1.500 8.500-8 9.300-15.500.1-1.500-2-1.500-1.800.2.700 6 6 12 11 12.600 1.800 0 1.600-2-.2-2.200C17 15.500 9 17.500 5.500 20.500c-1 1-.9 1.300-.5.5z" fill="none" stroke="#fff" strokeWidth="1.2" />
          </svg>
        </Slot>
        <div className="relative flex h-full w-[54.9px] items-center justify-center">
          <span className="flex h-12 w-12 items-center justify-center rounded-[5px] border border-[#dfe7f7] bg-[#e9eefb]">
            <span className="flex h-7 w-7 items-center justify-center bg-[#f7f7f7] shadow-[1px_1px_2px_#aaa]"><TableauMark colors={BLUES} className="h-6 w-6" /></span>
          </span>
          <span className="absolute bottom-[6px] h-1 w-5 rounded-full bg-[#0b78d8]" />
        </div>
      </div>
      <div className="ml-auto flex shrink-0 items-center pr-[25px]">
        <svg viewBox="0 0 14 8" className="h-2 w-[14px]" fill="none" stroke="currentColor" strokeWidth="1.5"><path d="M.8 7.200L7 1l6.200 6.200" /></svg>
        <svg viewBox="0 0 20 18" className="ml-[22px] mr-px h-[18px] w-5">
          <path d="M4.500 13A4 4 0 0 1 4 5.500 6.500 6.500 0 0 1 15.500 4.500 4.300 4.300 0 0 1 17.500 12z" fill="#8e8e8e" stroke="#222" strokeWidth="1.2" />
          <circle cx="14.5" cy="12.5" r="5.5" fill="#f4f8fe" /><path d="M11.300 11.500a3.500 3.500 0 0 1 6.200-1M17.700 13.500a3.500 3.500 0 0 1-6.200 1M17.700 8.500v2.300h-2.300M11.300 16.500v-2.300h2.300" fill="none" stroke="#1670c8" strokeWidth="1.2" />
        </svg>
        <svg viewBox="0 0 20 16" className="ml-5 h-4 w-5" fill="none" stroke="currentColor" strokeWidth="1.3">
          <path d="M.8 6a13 13 0 0 1 18.400 0M3.600 8.800a9 9 0 0 1 12.800 0M6.400 11.500a5 5 0 0 1 7.200 0" /><circle cx="10" cy="14" r="1.6" fill="currentColor" stroke="none" />
        </svg>
        <svg viewBox="0 0 20 16" className="ml-[10px] h-4 w-5" fill="none" stroke="currentColor" strokeWidth="1.2">
          <path d="M.8 5.500h3L8.500 1.500v13L3.800 10.500h-3zM11 5.500a4 4 0 0 1 0 5M13.500 3.200a7 7 0 0 1 0 9.600M16 1a10.500 10.500 0 0 1 0 14" />
        </svg>
        <svg viewBox="0 0 20 16" className="ml-[10px] h-4 w-5" fill="none" stroke="currentColor" strokeWidth="1.3">
          <path d="M8 3.500h7.500a2 2 0 0 1 2 2V12a2 2 0 0 1-2 2H3a2 2 0 0 1-2-2V8" /><path d="M18.500 7v4" strokeWidth="2" />
          <path d="M4 0L0 5.500h2.800L2 9l4-5.500H3.300z" fill="currentColor" stroke="none" /><path d="M2.500 12.500V9.500L6 7v5.500z" fill="currentColor" stroke="none" />
        </svg>
        <div className="ml-[20px] flex w-[62px] flex-col items-end gap-[6px] whitespace-nowrap text-[14.5px]">
          <span>1:38 AM</span><span>5/6/2024</span>
        </div>
        <svg viewBox="0 0 16 18" className="ml-[11px] h-[18px] w-4" fill="none" stroke="currentColor" strokeWidth="1.4">
          <path d="M8 1a5.400 5.400 0 0 0-5.400 5.400V10L1 13.500h14L13.400 10V6.400A5.400 5.400 0 0 0 8 1zM6 14.500a2 2 0 0 0 4 0" />
        </svg>
        <div className="relative ml-[22px] mr-px h-[29px] w-[29px]">
          <svg viewBox="0 0 29 29" className="h-[29px] w-[29px]">
            <defs>
              <linearGradient id="c1" x1=".5" y1="0" x2=".3" y2="1"><stop offset="0" stopColor="#1b8ef0" /><stop offset=".5" stopColor="#2fb7a0" /><stop offset="1" stopColor="#f4c924" /></linearGradient>
              <linearGradient id="c2" x1=".7" y1="0" x2=".3" y2="1"><stop offset="0" stopColor="#8a5cf0" /><stop offset=".5" stopColor="#e45bb0" /><stop offset="1" stopColor="#ff8a55" /></linearGradient>
            </defs>
            <path d="M7 0h12c2 0 3 2 3.500 5l.5 2h-6c-2 0-3 1-3.500 3L11 17c-.5 2-1.500 3-3.500 3H3c-3 0-3.500-2.500-2.500-6L3 4C4 1 5 0 7 0z" fill="url(#c1)" />
            <path d="M14 0h5c2 0 3 2 3.500 5l.5 2h-6z" fill="#1747c8" />
            <path d="M22 7h4c3 0 3.500 2.500 2.500 6L26 22c-1 3-2 4-4 4H10c2-1 3-2 3.500-4L17 10c.5-2 2-3 5-3z" fill="url(#c2)" />
          </svg>
          <span className="absolute bottom-0 right-[-1px] flex h-[9px] w-[23px] items-center justify-center rounded-[2px] bg-[#fdc50f] text-[8px] font-bold leading-none tracking-[0.5px] text-black">PRE</span>
        </div>
      </div>
    </div>
  );
}

export default function App() {
  return (
    <div className="relative flex h-[1080px] w-[1920px] flex-col overflow-hidden bg-[#f4f4f4] font-['Open_Sans',sans-serif]">
      <TitleBar />
      <MenuBar />
      <Toolbar />
      <div className="flex h-[852px] shrink-0">
        <DataPane />
        <Cards />
        <div className="ml-[6px] flex flex-1 flex-col">
          <Shelf label="Columns" icon={<svg viewBox="0 0 12 12" className="h-3 w-3" fill="#666"><path d="M1 0h2v2H1zM5 0h2v2H5zM9 0h2v2H9zM1 3.500h2V12H1zM5 3.500h2V12H5zM9 3.500h2V12H9z" /></svg>}>
            Inbound
          </Shelf>
          <div className="h-[6px] shrink-0" />
          <Shelf label="Rows" icon={<svg viewBox="0 0 12 12" className="h-3 w-3" fill="#666"><path d="M0 1h2v2H0zM0 5h2v2H0zM0 9h2v2H0zM3.500 1H12v2H3.500zM3.500 5H12v2H3.500zM3.500 9H12v2H3.500z" /></svg>}>
            <svg viewBox="0 0 10 10" className="mr-[7px] h-[10px] w-[10px]" fill="none" stroke="#fff" strokeWidth="1.1"><path d="M.5.5h9v9h-9zM5 2.500v5M2.500 5h5" /></svg>
            <span className="tracking-[0.38px]">HOUR(Created At)</span>
          </Shelf>
          <Sheet />
        </div>
      </div>
      <SheetTabs />
      <StatusBar />
      <Taskbar />
      <ShowMe />
    </div>
  );
}
